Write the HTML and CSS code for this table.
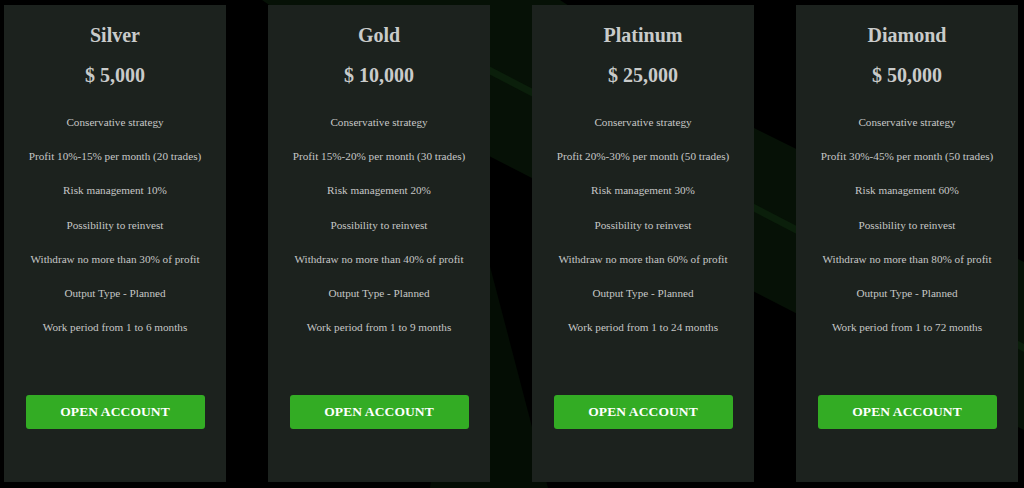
FILE: index.html
```html
<!DOCTYPE html>
<html lang="en">
<head>
<meta charset="utf-8">
<title>Plans</title>
<link rel="stylesheet" href="styles.css">
</head>
<body>
<div class="stage">
  <svg class="backdrop" viewBox="0 0 1024 488" width="1024" height="488" aria-hidden="true">
    <polygon points="262,0 560,0 754,128 1024,262 1024,430 491,157" fill="#061106"/>
    <polygon points="400,20 1024,344 1024,352 400,28" fill="#0b1f0b"/>
    <polygon points="470,190 548,488 430,488" fill="#040d04"/>
  </svg>
  <main class="plans">
    <section class="card">
      <h2 class="card-title">Silver</h2>
      <p class="card-price">$ 5,000</p>
      <ul class="features">
        <li>Conservative strategy</li>
        <li>Profit 10%-15% per month (20 trades)</li>
        <li>Risk management 10%</li>
        <li>Possibility to reinvest</li>
        <li>Withdraw no more than 30% of profit</li>
        <li>Output Type - Planned</li>
        <li>Work period from 1 to 6 months</li>
      </ul>
      <a class="btn" href="#">OPEN ACCOUNT</a>
    </section>
    <section class="card">
      <h2 class="card-title">Gold</h2>
      <p class="card-price">$ 10,000</p>
      <ul class="features">
        <li>Conservative strategy</li>
        <li>Profit 15%-20% per month (30 trades)</li>
        <li>Risk management 20%</li>
        <li>Possibility to reinvest</li>
        <li>Withdraw no more than 40% of profit</li>
        <li>Output Type - Planned</li>
        <li>Work period from 1 to 9 months</li>
      </ul>
      <a class="btn" href="#">OPEN ACCOUNT</a>
    </section>
    <section class="card">
      <h2 class="card-title">Platinum</h2>
      <p class="card-price">$ 25,000</p>
      <ul class="features">
        <li>Conservative strategy</li>
        <li>Profit 20%-30% per month (50 trades)</li>
        <li>Risk management 30%</li>
        <li>Possibility to reinvest</li>
        <li>Withdraw no more than 60% of profit</li>
        <li>Output Type - Planned</li>
        <li>Work period from 1 to 24 months</li>
      </ul>
      <a class="btn" href="#">OPEN ACCOUNT</a>
    </section>
    <section class="card">
      <h2 class="card-title">Diamond</h2>
      <p class="card-price">$ 50,000</p>
      <ul class="features">
        <li>Conservative strategy</li>
        <li>Profit 30%-45% per month (50 trades)</li>
        <li>Risk management 60%</li>
        <li>Possibility to reinvest</li>
        <li>Withdraw no more than 80% of profit</li>
        <li>Output Type - Planned</li>
        <li>Work period from 1 to 72 months</li>
      </ul>
      <a class="btn" href="#">OPEN ACCOUNT</a>
    </section>
  </main>
</div>
</body>
</html>
```

FILE: styles.css
```css
* { box-sizing: border-box; }

html, body {
  margin: 0;
  padding: 0;
  background: #000;
}

body {
  width: 1024px;
  height: 488px;
  overflow: hidden;
  font-family: "Liberation Serif", "Times New Roman", serif;
}

.stage {
  position: relative;
  width: 1024px;
  height: 488px;
}

.backdrop {
  position: absolute;
  left: 0;
  top: 0;
  z-index: 0;
  display: block;
}

.plans {
  position: relative;
  z-index: 1;
  display: flex;
  gap: 42px;
  padding: 5px 0 0 4px;
}

.card {
  width: 222px;
  height: 477px;
  background: #1c221e;
  display: flex;
  flex-direction: column;
  align-items: center;
  padding-top: 18px;
}

.card-title {
  margin: 0;
  font-size: 20px;
  line-height: 24px;
  font-weight: bold;
  color: #c9cbca;
  text-align: center;
}

.card-price {
  margin: 16px 0 0;
  font-size: 20px;
  line-height: 24px;
  font-weight: bold;
  color: #c9cbca;
  text-align: center;
}

.features {
  list-style: none;
  margin: 18px 0 0;
  padding: 0;
  width: 100%;
  text-align: center;
}

.features li {
  font-size: 11.2px;
  line-height: 34.2px;
  height: 34.2px;
  color: #c6c7c6;
  white-space: nowrap;
}

.btn {
  margin-top: 51px;
  width: 179px;
  height: 34px;
  border-radius: 3px;
  background: #33ac24;
  color: #fff;
  text-decoration: none;
  font-weight: bold;
  font-size: 13.5px;
  display: flex;
  align-items: center;
  justify-content: center;
  letter-spacing: 0.1px;
}
```
